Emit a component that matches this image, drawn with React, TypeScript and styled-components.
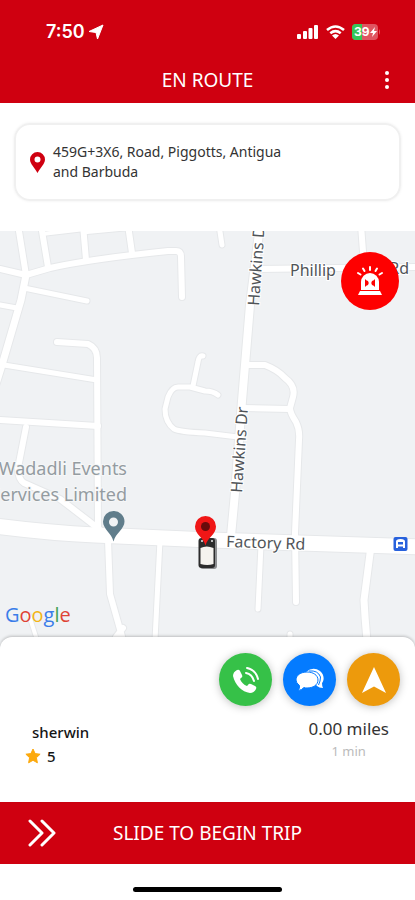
import React from "react";
import styled, { createGlobalStyle } from "styled-components";

const GlobalStyle = createGlobalStyle`
  * { box-sizing: border-box; }
  body { margin: 0; background: #fff; }
  button { font: inherit; color: inherit; border: 0; padding: 0; background: none; cursor: pointer; }
`;

const RED = "#cf0010";

const Screen = styled.div`
  display: flex;
  flex-direction: column;
  min-height: 100vh;
  background: #fff;
  color: #333;
  font-family: "Noto Sans", "Open Sans", sans-serif;
`;

const Header = styled.header`
  background: ${RED};
  color: #fff;
`;

const StatusBar = styled.div`
  display: flex;
  align-items: center;
  justify-content: space-between;
  height: 56px;
  padding: 8px 34px 0 46px;
`;

const Clock = styled.div`
  display: flex;
  align-items: center;
  gap: 3px;
  font: 600 18px/24px Inter, sans-serif;
`;

const StatusIcons = styled.div`
  display: flex;
  align-items: center;
  gap: 7px;
`;

const TitleBar = styled.div`
  display: grid;
  grid-template-columns: 44px 1fr 44px;
  align-items: center;
  height: 47px;
  padding: 0 6px 0 6px;
`;

const Title = styled.h1`
  grid-column: 2;
  margin: 0;
  text-align: center;
  font-size: 19px;
  line-height: 28px;
  font-weight: 400;
`;

const MenuButton = styled.button`
  display: grid;
  place-items: center;
  height: 40px;
`;

const AddressArea = styled.section`
  padding: 20px 14px 30px;
`;

const AddressCard = styled.address`
  display: flex;
  align-items: center;
  gap: 8px;
  min-height: 78px;
  padding: 0 100px 0 14px;
  border: 2px solid #f0f0f0;
  border-radius: 16px;
  box-shadow: 0 0 3px #eee;
  font-size: 14px;
  line-height: 20px;
  font-style: normal;

  svg { flex: none; }
`;

const MapArea = styled.main`
  position: relative;
  flex: 1;
  min-height: 406px;
  overflow: hidden;
  background: #f0f2f4;
`;

const MapDrawing = styled.svg`
  position: absolute;
  inset: 0;
  width: 100%;
  height: 100%;
`;

const RoadLabel = styled.text`
  font: 400 16px "Noto Sans", sans-serif;
  fill: #505458;
  stroke: #fff;
  stroke-width: 2px;
  paint-order: stroke;
`;

const PlaceLabel = styled.text`
  font: 400 18px "Noto Sans", sans-serif;
  fill: #949ca1;
  stroke: #f6f7f8;
  stroke-width: 2px;
  paint-order: stroke;
  text-anchor: end;
`;

const GoogleMark = styled.text`
  font: 500 20px "Open Sans", sans-serif;
`;

const AlertButton = styled.button`
  position: absolute;
  top: 21px;
  right: 16px;
  display: grid;
  place-items: center;
  width: 58px;
  height: 58px;
  border-radius: 50%;
  background: #fe0000;
`;

const Sheet = styled.section`
  position: relative;
  padding: 16px 15px 0;
  min-height: 165px;
  border-radius: 12px 12px 0 0;
  background: #fff;
  box-shadow: 0 -1px 3px rgba(0, 0, 0, 0.22);
`;

const MapUnderlap = styled.div`
  display: flex;
  flex-direction: column;
  flex: 1;
  background: #f0f2f4;
`;

const Actions = styled.div`
  display: flex;
  justify-content: flex-end;
  gap: 11px;
`;

const RoundButton = styled.button<{ $color: string }>`
  display: grid;
  place-items: center;
  width: 53px;
  height: 53px;
  border-radius: 50%;
  background: ${(p) => p.$color};
  box-shadow: 0 1px 8px rgba(0, 0, 0, 0.25);
`;

const TripInfo = styled.div`
  display: flex;
  justify-content: space-between;
  padding: 11px 11px 0 10px;
`;

const Rider = styled.div`
  padding-top: 3px;
  color: #151515;
  font-size: 15px;
  line-height: 24px;
  font-weight: 500;
`;

const RiderName = styled.div`
  padding-left: 7px;
`;

const Rating = styled.div`
  display: flex;
  align-items: center;
  gap: 6px;
`;

const Estimate = styled.div`
  text-align: center;
`;

const Distance = styled.div`
  font-size: 17px;
  line-height: 24px;
`;

const Duration = styled.div`
  color: #bbb;
  font-size: 13px;
  line-height: 20px;
`;

const SlideButton = styled.button`
  && {
    display: grid;
    grid-template-columns: 56px 1fr 56px;
    align-items: center;
    width: 100%;
    height: 62px;
    padding: 0 28px;
    background: ${RED};
    color: #fff;
    font-size: 19px;
    line-height: 28px;
    text-align: center;
  }
`;

const HomeArea = styled.footer`
  display: flex;
  justify-content: center;
  height: 36px;
  padding-top: 23px;
`;

const HomeIndicator = styled.div`
  width: 36%;
  height: 5px;
  border-radius: 3px;
  background: #000;
`;

const ROADS: { d: string; w: number }[] = [
  { d: "M18 225L26 275", w: 6 },
  { d: "M0 269L26 275L50 268Q90 259 168 251H176Q181 251 181 257L182 297", w: 6 },
  { d: "M41 225L48 267", w: 6 },
  { d: "M83 225L86 260", w: 6 },
  { d: "M128 225L132 253", w: 6 },
  { d: "M42 234L85 229M87 232L130 228", w: 4 },
  { d: "M26 275L21 300L2 365L-4 384", w: 7 },
  { d: "M24 288L87 301", w: 5 },
  { d: "M0 305L17 308", w: 5 },
  { d: "M57 342L88 344Q97 348 97 358L98 530", w: 6 },
  { d: "M4 365L97 380", w: 5 },
  { d: "M0 420L98 426", w: 6 },
  { d: "M26 427L18 468Q18 479 24 483L60 499L99 529", w: 6 },
  { d: "M203 356Q199 355 198 362L193 386", w: 5 },
  { d: "M218 395Q213 391 205 391L190 387H178Q172 387 168 397L165 409Q165 422 174 429Q180 432 205 433L238 437", w: 5 },
  { d: "M219 225L222 245", w: 5 },
  { d: "M260 225L250 305L242 401L235 493L231 536", w: 8 },
  { d: "M258 269L415 267", w: 6 },
  { d: "M361 225L364 265", w: 6 },
  { d: "M245 365H265Q278 370 285 378Q296 386 293 397L290 408Q290 413 296 422Q300 430 299 440L295 533L296 602", w: 6 },
  { d: "M243 408L290 409", w: 6 },
  { d: "M108 540L110 594L123 640M123 628L116 637", w: 6 },
  { d: "M160 540L155 640", w: 5 },
  { d: "M29 615L37 640", w: 4 },
  { d: "M261 545L258 609", w: 5 },
  { d: "M371 546L364 600Q365 620 367 640", w: 7 },
  { d: "M290 634L290 642", w: 5 },
  { d: "M-5 526Q50 533 95 535L210 540L420 547", w: 15 },
];

const StreetMap = () => (
  <MapDrawing viewBox="0 231 415 406" preserveAspectRatio="xMidYMid slice" role="img" aria-label="Map of the route">
    <g fill="none" stroke="#e6e8ea" strokeLinecap="round" strokeLinejoin="round">
      {ROADS.map((r) => <path key={r.d} d={r.d} strokeWidth={r.w + 2} />)}
    </g>
    <g fill="none" stroke="#fff" strokeLinecap="round" strokeLinejoin="round">
      {ROADS.map((r) => <path key={r.d} d={r.d} strokeWidth={r.w} />)}
    </g>
    <RoadLabel transform="translate(259 306) rotate(-86)">Hawkins Dr</RoadLabel>
    <RoadLabel transform="translate(242 493) rotate(-86)">Hawkins Dr</RoadLabel>
    <RoadLabel x="290" y="276">Phillip</RoadLabel>
    <RoadLabel x="409" y="274" textAnchor="end">Rd</RoadLabel>
    <RoadLabel transform="translate(226 547) rotate(2)">Factory Rd</RoadLabel>
    <PlaceLabel x="127" y="475">Wadadli Events</PlaceLabel>
    <PlaceLabel x="127" y="501">Services Limited</PlaceLabel>
    <path fill="#607d8b" fillRule="evenodd" d="M113.500 511a10.500 10.500 0 0 0-10.500 10.500c0 7.500 8.500 11.500 10.500 20 2-8.500 11-12.500 11-20A10.500 10.500 0 0 0 113.500 511Zm0 6.500a4.500 4.500 0 1 1 0 9 4.500 4.500 0 0 1 0-9Z" />
    <g>
      <rect x="200" y="538" width="17" height="31" rx="3" fill="#8d8f91" />
      <rect x="198.500" y="538" width="16.500" height="30" rx="3" fill="#2c2c2c" />
      <path d="M200.500 548q6-3 13 0v16q-6 2-13 0Z" fill="#f5f3ef" />
      <path d="M201 540h2v2h-2ZM211 540h2v2h-2Z" fill="#bbb" />
    </g>
    <path fill="#f01616" d="M205.500 516a10.500 10.500 0 0 0-10.500 10.500c0 8 8.500 11 10.500 19 2-8 10.500-11 10.500-19A10.500 10.500 0 0 0 205.500 516Z" />
    <circle cx="205.500" cy="526.500" r="4.500" fill="#690b0b" />
    <g>
      <rect x="393.500" y="537" width="14" height="14" rx="2" fill="#2861dc" />
      <path fill="#fff" fillRule="evenodd" d="M396 548v-6.500q0-2.500 4.500-2.500t4.500 2.500v6.500h-2v-1.500h-5v1.500Zm2-6v2.500h5v-2.500Z" />
    </g>
    <GoogleMark x="5" y="622">
      <tspan fill="#3b7de9">G</tspan><tspan fill="#df4335">o</tspan><tspan fill="#f3b516">o</tspan><tspan fill="#3b7de9">g</tspan><tspan fill="#45a357">l</tspan><tspan fill="#df4335">e</tspan>
    </GoogleMark>
  </MapDrawing>
);

const Siren = () => (
  <svg width="28" height="32" viewBox="0 0 28 32" aria-hidden="true">
    <g stroke="#fff" strokeWidth="2" strokeLinecap="round">
      <path d="M14 2v3M7 3.500l1.500 2.500M21 3.500L19.500 6M2 8l2.500 1.500M26 8l-2.500 1.500" />
    </g>
    <path fill="#fff" d="M5 25V17a9 9 0 0 1 18 0v8Z" />
    <path fill="#fff" d="M4 26h20l2 4H2Z" />
    <path fill="#fe0000" d="M9 14q1 1.500 3 2 1.500 2 0 4-2 .5-3 2ZM19 14q-1 1.500-3 2-1.500 2 0 4 2 .5 3 2Z" />
  </svg>
);

export default function App() {
  return (
    <Screen>
      <GlobalStyle />
      <Header>
        <StatusBar>
          <Clock>
            <span>7:50</span>
            <svg width="16" height="16" viewBox="0 0 16 16" aria-hidden="true">
              <path fill="#fff" stroke="#fff" strokeWidth="1" strokeLinejoin="round" d="M15 1L9.500 15 8 8.500 1 7.500Z" />
            </svg>
          </Clock>
          <StatusIcons>
            <svg width="22" height="14" viewBox="0 0 22 14" fill="#fff" aria-label="Signal">
              <rect x="0" y="9" width="4" height="5" rx="1" />
              <rect x="6" y="6" width="4" height="8" rx="1" />
              <rect x="11.500" y="3" width="4" height="11" rx="1" />
              <rect x="17" y="0" width="4" height="14" rx="1" />
            </svg>
            <svg width="19" height="14" viewBox="0 0 19 14" fill="none" stroke="#fff" strokeWidth="2.600" aria-label="Wi-Fi">
              <path d="M1 5Q9.500-2 18 5M4.300 8.300Q9.500 4 14.700 8.300" />
              <path fill="#fff" stroke="none" d="M9.500 14L6 10.500q3.500-3 7 0Z" />
            </svg>
            <svg width="29" height="16" viewBox="0 0 29 16" aria-label="Battery 39%">
              <rect width="26" height="16" rx="4" fill="#df5560" />
              <path d="M10 0H4a4 4 0 0 0-4 4v8a4 4 0 0 0 4 4h6Z" fill="#35c759" />
              <path d="M27 5q2 3 0 6Z" fill="#df5560" />
              <text x="2" y="12" fill="#fff" fontFamily="Inter, sans-serif" fontSize="12" fontWeight="700">39</text>
              <path d="M23 3L18 9h3l-1 4 5-6h-3Z" fill="#fff" />
            </svg>
          </StatusIcons>
        </StatusBar>
        <TitleBar>
          <Title>EN ROUTE</Title>
          <MenuButton aria-label="More options">
            <svg width="4" height="20" viewBox="0 0 4 20" fill="#fff" aria-hidden="true">
              <circle cx="2" cy="3" r="2" /><circle cx="2" cy="10" r="2" /><circle cx="2" cy="17" r="2" />
            </svg>
          </MenuButton>
        </TitleBar>
      </Header>

      <AddressArea>
        <AddressCard>
          <svg width="15" height="21" viewBox="0 0 15 21" aria-hidden="true">
            <path fill={RED} fillRule="evenodd" d="M7.500 0A7.500 7.500 0 0 0 0 7.500C0 12 5 16 7.500 21 10 16 15 12 15 7.500A7.500 7.500 0 0 0 7.500 0Zm0 4.500a3 3 0 1 1 0 6 3 3 0 0 1 0-6Z" />
          </svg>
          <span>459G+3X6, Road, Piggotts, Antigua and Barbuda</span>
        </AddressCard>
      </AddressArea>

      <MapUnderlap>
        <MapArea>
          <StreetMap />
          <AlertButton aria-label="Emergency"><Siren /></AlertButton>
        </MapArea>
        <Sheet>
          <Actions>
            <RoundButton $color="#36c148" aria-label="Call">
              <svg width="28" height="28" viewBox="0 0 28 28" aria-hidden="true">
                <path fill="#fff" d="M5 4Q1 6 1 10c2 9 9 16 17 17q4 0 6-4 1-2-1-3l-4-2q-2-1-3 1l-1 1c-3-1-6-4-7-7l1-1q2-1 1-3L8 5Q7 3 5 4Z" />
                <path fill="none" stroke="#fff" strokeWidth="2" strokeLinecap="round" d="M14 7q6 1 8 8M15 2q9 2 11 11" />
              </svg>
            </RoundButton>
            <RoundButton $color="#047bff" aria-label="Chat">
              <svg width="28" height="24" viewBox="0 0 28 24" aria-hidden="true">
                <path fill="#fff" d="M10 4Q17-2 24 3c5 4 4 10 2 12q0 3 1 5-4 0-6-2Z" />
                <path fill="none" stroke="#047bff" d="M13 3Q22 2 24.500 9q0 4-2 8" />
                <path fill="#fff" stroke="#047bff" d="M11 4c6 0 11 3 11 8s-5 8-11 8q-2 0-3-.5Q6 22 2 22.500q2-2 1.500-5Q0 15 0 12c0-5 5-8 11-8Z" />
              </svg>
            </RoundButton>
            <RoundButton $color="#ed9a0c" aria-label="Navigate">
              <svg width="24" height="26" viewBox="0 0 24 26" aria-hidden="true">
                <path fill="#fff" d="M12 0L24 26 12 19.500 0 26Z" />
              </svg>
            </RoundButton>
          </Actions>
          <TripInfo>
            <Rider>
              <RiderName>sherwin</RiderName>
              <Rating>
                <svg width="16" height="16" viewBox="0 0 16 16" aria-label="Rating">
                  <path fill="#fca90d" stroke="#fca90d" strokeWidth="1" strokeLinejoin="round" d="M8 1l2.100 4.600 5 .6-3.700 3.500 1 5.100L8 12.300l-4.400 2.500 1-5.100L.9 6.200l5-.6Z" />
                </svg>
                <span>5</span>
              </Rating>
            </Rider>
            <Estimate>
              <Distance>0.00 miles</Distance>
              <Duration>1 min</Duration>
            </Estimate>
          </TripInfo>
        </Sheet>
      </MapUnderlap>

      <SlideButton>
        <svg width="28" height="28" viewBox="0 0 28 28" fill="none" stroke="#fff" strokeWidth="3" strokeLinecap="round" strokeLinejoin="round" aria-hidden="true">
          <path d="M2 2l12 12L2 26M14 2l12 12-12 12" />
        </svg>
        <span>SLIDE TO BEGIN TRIP</span>
      </SlideButton>
      <HomeArea><HomeIndicator /></HomeArea>
    </Screen>
  );
}
